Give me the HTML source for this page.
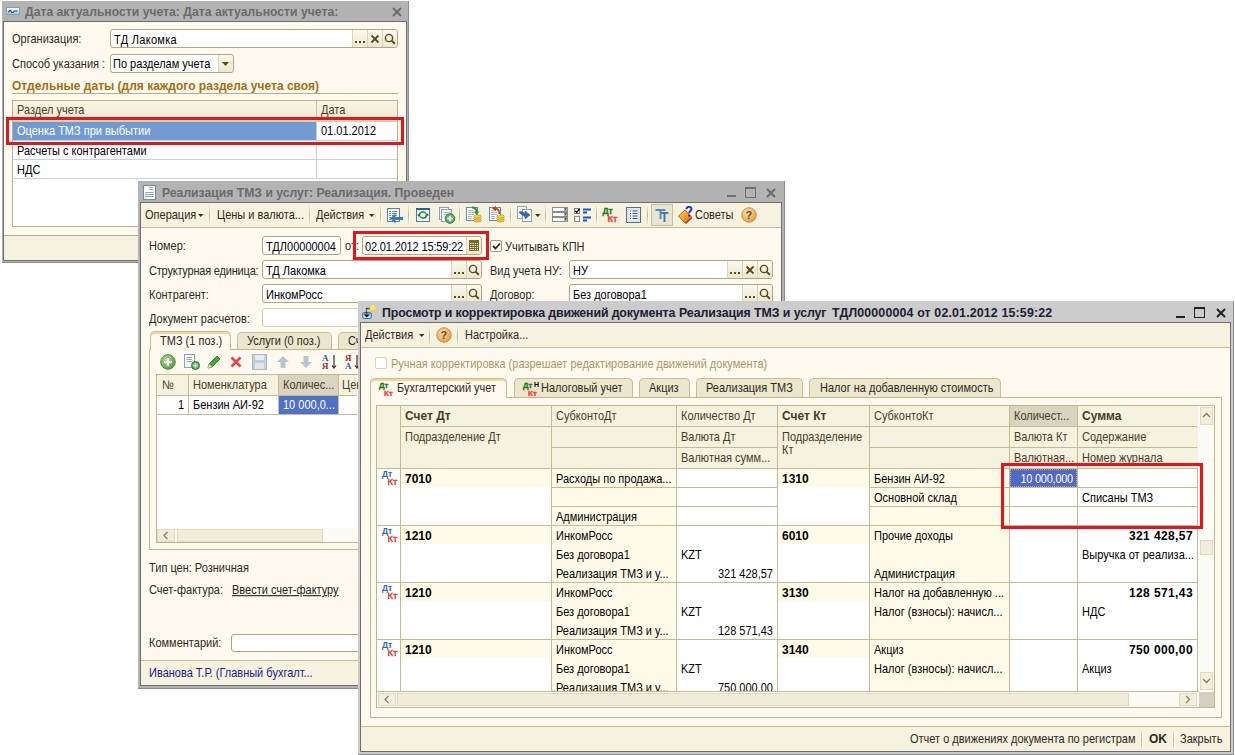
<!DOCTYPE html><html><head><meta charset="utf-8"><style>
html,body{margin:0;padding:0;width:1235px;height:755px;overflow:hidden;background:#fff;position:relative}
div,span,svg{position:absolute}
span{white-space:nowrap;line-height:13px;font-family:"Liberation Sans",sans-serif;font-size:11px}
span.n{transform:scaleY(1.12);transform-origin:0 10px}
</style></head><body>
<div style="left:2px;top:1px;width:407px;height:262px;background:#b3b3b3"></div>
<div style="left:2px;top:262px;width:407px;height:1px;background:#8c8c8c"></div>
<div style="left:408px;top:1px;width:1px;height:262px;background:#8c8c8c"></div>
<div style="left:3px;top:21px;width:404px;height:240px;box-sizing:border-box;border:1px solid #6e6e6e;background:#fefaf0"></div>
<svg style="position:absolute;left:6px;top:7px;" width="14" height="8" viewBox="0 0 14 8"><defs><linearGradient id="g1" x1="0" y1="0" x2="0" y2="1"><stop offset="0" stop-color="#fff"/><stop offset="1" stop-color="#9cc6ea"/></linearGradient></defs><rect x="0.5" y="0.5" width="13" height="7" fill="url(#g1)" stroke="#8a9bb0"/><path d="M2.5 5.5C3.5 3 4.5 2.5 5.5 5C6.5 6.5 7.5 5 8.5 4H11.5" fill="none" stroke="#1f4a6a" stroke-width="1.2"/></svg>
<span style="left:25px;top:6px;font-size:12.2px;font-weight:bold;color:#6b6b6b;">Дата актуальности учета: Дата актуальности учета:</span>
<svg style="position:absolute;left:392px;top:7px;" width="10" height="10" viewBox="0 0 10 10"><path d="M1.0 1.0L9.0 9.0M9.0 1.0L1.0 9.0" stroke="#6b6b6b" stroke-width="2" stroke-linecap="butt"/></svg>
<span class="n" style="left:12px;top:33px;color:#30281a;">Организация:</span>
<div style="left:110px;top:29px;width:288px;height:19px;box-sizing:border-box;border:1px solid #b4a67b;border-radius:3px;background:#fff"></div>
<span class="n" style="left:114px;top:34px;color:#000;letter-spacing:0.3px">ТД Лакомка</span>
<div style="left:382px;top:30px;width:15px;height:17px;background:linear-gradient(#fbf9f0,#ece7d2);border-left:1px solid #ddd5bb;box-sizing:border-box;border-radius:0 3px 3px 0"></div>
<svg style="position:absolute;left:384px;top:33px;" width="12" height="12" viewBox="0 0 12 12"><circle cx="5" cy="5" r="3.6" fill="none" stroke="#5a4a14" stroke-width="1.4"/><path d="M7.6 7.6L10.8 10.8" stroke="#5a4a14" stroke-width="2"/></svg>
<div style="left:367px;top:30px;width:15px;height:17px;background:linear-gradient(#fbf9f0,#ece7d2);border-left:1px solid #ddd5bb;box-sizing:border-box"></div>
<svg style="position:absolute;left:370px;top:34px;" width="10" height="10" viewBox="0 0 10 10"><path d="M1.5 1.5L8.5 8.5M8.5 1.5L1.5 8.5" stroke="#5a4a14" stroke-width="1.8"/></svg>
<div style="left:352px;top:30px;width:15px;height:17px;background:linear-gradient(#fbf9f0,#ece7d2);border-left:1px solid #ddd5bb;box-sizing:border-box"></div>
<div style="left:355px;top:41px;width:2px;height:2px;background:#5a4a14"></div>
<div style="left:359px;top:41px;width:2px;height:2px;background:#5a4a14"></div>
<div style="left:363px;top:41px;width:2px;height:2px;background:#5a4a14"></div>
<span class="n" style="left:12px;top:58px;color:#30281a;">Способ указания :</span>
<div style="left:110px;top:54px;width:124px;height:19px;box-sizing:border-box;border:1px solid #b4a67b;border-radius:3px;background:#fff"></div>
<span class="n" style="left:113px;top:58px;color:#000;">По разделам учета</span>
<div style="left:218px;top:55px;width:15px;height:17px;background:linear-gradient(#fbf9f0,#ece7d2);border-left:1px solid #ddd5bb;box-sizing:border-box;border-radius:0 3px 3px 0"></div>
<svg style="position:absolute;left:222px;top:62px;" width="8" height="5" viewBox="0 0 8 5"><path d="M0 0H7L3.5 4Z" fill="#5a4a14"/></svg>
<span style="left:12px;top:80px;font-size:12px;font-weight:bold;color:#a66e0e;">Отдельные даты (для каждого раздела учета своя)</span>
<div style="left:12px;top:93px;width:386px;height:1px;background:#b8b08a"></div>
<div style="left:12px;top:100px;width:386px;height:127px;box-sizing:border-box;border:1px solid #bcb08a;background:#fff"></div>
<div style="left:13px;top:101px;width:384px;height:19px;background:linear-gradient(#f8f5e6,#eee9d2)"></div>
<div style="left:13px;top:120px;width:384px;height:2px;background:#d8cfb3"></div>
<div style="left:316px;top:101px;width:1px;height:20px;background:#cfc4a0"></div>
<span class="n" style="left:17px;top:104px;color:#4a3d1f;">Раздел учета</span>
<span class="n" style="left:321px;top:104px;color:#4a3d1f;">Дата</span>
<div style="left:13px;top:122px;width:303px;height:18px;background:#6f9bd1"></div>
<span class="n" style="left:17px;top:125px;color:#fff;">Оценка ТМЗ при выбытии</span>
<span class="n" style="left:321px;top:125px;color:#000;">01.01.2012</span>
<div style="left:316px;top:121px;width:1px;height:58px;background:#c8d2de"></div>
<div style="left:13px;top:140px;width:384px;height:1px;background:#c8d2de"></div>
<div style="left:13px;top:159px;width:384px;height:1px;background:#c8d2de"></div>
<div style="left:13px;top:178px;width:384px;height:1px;background:#c8d2de"></div>
<span class="n" style="left:17px;top:145px;color:#000;">Расчеты с контрагентами</span>
<span class="n" style="left:17px;top:164px;color:#000;">НДС</span>
<div style="left:6px;top:117px;width:398px;height:28px;box-sizing:border-box;border:3px solid #e8141c;z-index:50"></div>
<div style="left:4px;top:235px;width:402px;height:1px;background:#b6ae88"></div>
<div style="left:4px;top:236px;width:402px;height:24px;background:#f5f2df"></div>
<div style="left:138px;top:181px;width:647px;height:508px;background:#b3b3b3"></div>
<div style="left:138px;top:688px;width:647px;height:1px;background:#8c8c8c"></div>
<div style="left:784px;top:181px;width:1px;height:508px;background:#8c8c8c"></div>
<div style="left:140px;top:202px;width:642px;height:484px;box-sizing:border-box;border:1px solid #6e6e6e;background:#fefaf0"></div>
<svg style="position:absolute;left:143px;top:185px;" width="13" height="15" viewBox="0 0 13 15"><rect x="0.5" y="0.5" width="12" height="14" fill="#fff" stroke="#6e8aa6"/><path d="M6 2.5H10M6 4.5H10M2 7.5H10.5M2 9.5H10.5M2 11.5H10.5" stroke="#8fa6bc" stroke-width="1"/></svg>
<span style="left:162px;top:187px;font-size:12.2px;font-weight:bold;color:#6b6b6b;">Реализация ТМЗ и услуг: Реализация. Проведен</span>
<div style="left:727px;top:195px;width:9px;height:2px;background:#6e6e6e"></div>
<div style="left:745px;top:187px;width:11px;height:11px;box-sizing:border-box;border:1px solid #6e6e6e;border-top-width:2px"></div>
<svg style="position:absolute;left:766px;top:188px;" width="10" height="10" viewBox="0 0 10 10"><path d="M1.0 1.0L9.0 9.0M9.0 1.0L1.0 9.0" stroke="#6b6b6b" stroke-width="2" stroke-linecap="butt"/></svg>
<div style="left:141px;top:203px;width:640px;height:24px;background:#f5f2df"></div>
<div style="left:141px;top:227px;width:640px;height:1px;background:#c6bb95"></div>
<span class="n" style="left:145px;top:209px;color:#30281a;">Операция</span>
<svg style="position:absolute;left:198px;top:214px;" width="6" height="4" viewBox="0 0 6 4"><path d="M0 0H5.5L2.75 3Z" fill="#3d3319"/></svg>
<div style="left:209px;top:206px;width:1px;height:18px;background:linear-gradient(rgba(190,180,140,0.2),#bfb48e 50%,rgba(190,180,140,0.2))"></div>
<div style="left:210px;top:206px;width:1px;height:18px;background:#fbf9f1"></div>
<span class="n" style="left:217px;top:209px;color:#30281a;">Цены и валюта...</span>
<div style="left:309px;top:206px;width:1px;height:18px;background:linear-gradient(rgba(190,180,140,0.2),#bfb48e 50%,rgba(190,180,140,0.2))"></div>
<div style="left:310px;top:206px;width:1px;height:18px;background:#fbf9f1"></div>
<span class="n" style="left:316px;top:209px;color:#30281a;">Действия</span>
<svg style="position:absolute;left:369px;top:214px;" width="6" height="4" viewBox="0 0 6 4"><path d="M0 0H5.5L2.75 3Z" fill="#3d3319"/></svg>
<div style="left:380px;top:206px;width:1px;height:18px;background:linear-gradient(rgba(190,180,140,0.2),#bfb48e 50%,rgba(190,180,140,0.2))"></div>
<div style="left:381px;top:206px;width:1px;height:18px;background:#fbf9f1"></div>
<svg style="position:absolute;left:386px;top:207px;" width="18" height="17" viewBox="0 0 18 17"><rect x="1.5" y="1.5" width="12" height="13" fill="#fff" stroke="#5b7fa6"/><path d="M3 4.5H5M6 4.5H11M3 6.5H5M6 6.5H11M3 8.5H5M6 8.5H11M3 10.5H5M3 12.5H5" stroke="#5a88c0"/><path d="M17 11.5H8" stroke="#3a7ab8" stroke-width="3"/><path d="M9.5 6.5L4 11.5L9.5 16.5Z" fill="#3a7ab8"/></svg>
<div style="left:408px;top:206px;width:1px;height:18px;background:linear-gradient(rgba(190,180,140,0.2),#bfb48e 50%,rgba(190,180,140,0.2))"></div>
<div style="left:409px;top:206px;width:1px;height:18px;background:#fbf9f1"></div>
<svg style="position:absolute;left:416px;top:208px;" width="14" height="14" viewBox="0 0 14 14"><rect x="0.5" y="0.5" width="13" height="13" fill="#eef4fa" stroke="#5a7a9a"/><rect x="0" y="0" width="14" height="2" fill="#2f6090"/><path d="M3 7A4 4 0 0 1 10 5.5" stroke="#2a8a2a" stroke-width="1.5" fill="none"/><path d="M11 7A4 4 0 0 1 4 8.5" stroke="#2a8a2a" stroke-width="1.5" fill="none"/><path d="M1 6.5H5L3 9Z" fill="#1f7a1f"/><path d="M9 7.5H13L11 5Z" fill="#1f7a1f"/></svg>
<svg style="position:absolute;left:439px;top:207px;" width="17" height="17" viewBox="0 0 17 17"><rect x="0.5" y="0.5" width="9" height="12" fill="#fff" stroke="#8aa0c0"/><rect x="2.5" y="2.5" width="10" height="12" fill="#fff" stroke="#8aa0c0"/><path d="M4.5 5.5H10M4.5 7.5H8" stroke="#aab8c8"/><circle cx="11" cy="11.5" r="4.8" fill="#5fae5f" stroke="#3a7a3a"/><path d="M8.3 11.5H13.7M11 8.8V14.2" stroke="#fff" stroke-width="1.8"/></svg>
<div style="left:459px;top:206px;width:1px;height:18px;background:linear-gradient(rgba(190,180,140,0.2),#bfb48e 50%,rgba(190,180,140,0.2))"></div>
<div style="left:460px;top:206px;width:1px;height:18px;background:#fbf9f1"></div>
<svg style="position:absolute;left:466px;top:206px;" width="16" height="17" viewBox="0 0 16 17"><rect x="0.5" y="1.5" width="11" height="13" fill="#fff" stroke="#6a8aaa"/><path d="M2 4.5H7M2 6.5H8M2 8.5H8M2 10.5H6M2 12.5H6" stroke="#a8bcd0"/><path d="M6 1.5C9 1.5 10.5 2.5 10.5 6" stroke="#2a9a2a" stroke-width="1.8" fill="none"/><path d="M7.5 5.5H13.5L10.5 9Z" fill="#2a9a2a"/><g fill="#f5d44a" stroke="#b8901a" stroke-width="0.7"><ellipse cx="11.5" cy="14.5" rx="3.8" ry="1.6"/><ellipse cx="11.5" cy="12.5" rx="3.8" ry="1.6"/><ellipse cx="11.5" cy="10.5" rx="3.8" ry="1.6"/></g></svg>
<svg style="position:absolute;left:489px;top:206px;" width="16" height="17" viewBox="0 0 16 17"><rect x="0.5" y="1.5" width="11" height="13" fill="#fff" stroke="#6a8aaa"/><path d="M2 4.5H7M2 6.5H8M2 8.5H8M2 10.5H6M2 12.5H6" stroke="#a8bcd0"/><path d="M10.5 8C10.5 4 8.5 2.5 6 2.5" stroke="#e03020" stroke-width="1.8" fill="none"/><path d="M7 0L3 2.5L7 5Z" fill="#e03020"/><g fill="#f5d44a" stroke="#b8901a" stroke-width="0.7"><ellipse cx="11.5" cy="14.5" rx="3.8" ry="1.6"/><ellipse cx="11.5" cy="12.5" rx="3.8" ry="1.6"/><ellipse cx="11.5" cy="10.5" rx="3.8" ry="1.6"/></g></svg>
<div style="left:510px;top:206px;width:1px;height:18px;background:linear-gradient(rgba(190,180,140,0.2),#bfb48e 50%,rgba(190,180,140,0.2))"></div>
<div style="left:511px;top:206px;width:1px;height:18px;background:#fbf9f1"></div>
<svg style="position:absolute;left:517px;top:206px;" width="16" height="17" viewBox="0 0 16 17"><rect x="0.5" y="0.5" width="9" height="12" fill="#f4f4f4" stroke="#9aa8b8"/><rect x="5.5" y="3.5" width="9" height="12" fill="#fff" stroke="#8aa0b8"/><path d="M2 6C4 5 6 6 8 7.5V5L13 9L8 13V10.5C6 9.5 4 9 2 6Z" fill="#2f6fa8" stroke="#1f4f80" stroke-width="0.5"/></svg>
<svg style="position:absolute;left:535px;top:214px;" width="6" height="4" viewBox="0 0 6 4"><path d="M0 0H5.5L2.75 3Z" fill="#3d3319"/></svg>
<div style="left:545px;top:206px;width:1px;height:18px;background:linear-gradient(rgba(190,180,140,0.2),#bfb48e 50%,rgba(190,180,140,0.2))"></div>
<div style="left:546px;top:206px;width:1px;height:18px;background:#fbf9f1"></div>
<svg style="position:absolute;left:552px;top:207px;" width="17" height="16" viewBox="0 0 17 16"><g fill="#fff" stroke="#8c8c8c"><rect x="0.5" y="0.5" width="15" height="4"/><rect x="0.5" y="5.5" width="15" height="4"/><rect x="0.5" y="10.5" width="15" height="4"/></g><g fill="#b0b0b0"><rect x="12" y="1" width="3" height="3"/><rect x="12" y="6" width="3" height="3"/><rect x="12" y="11" width="3" height="3"/></g><g fill="#111"><path d="M12.5 1.5H14.5L13.5 3Z"/><path d="M12.5 6.5H14.5L13.5 8Z"/><path d="M12.5 11.5H14.5L13.5 13Z"/></g></svg>
<svg style="position:absolute;left:574px;top:207px;" width="18" height="16" viewBox="0 0 18 16"><rect x="0.5" y="1.5" width="5" height="5" fill="#fff" stroke="#888"/><path d="M1.3 3.8L2.8 5.5L5.5 1.8" stroke="#000" stroke-width="1.3" fill="none"/><rect x="0.5" y="9.5" width="5" height="5" fill="#fff" stroke="#888"/><path d="M9 2.5H17M9 5.5H13M9 10.5H17M9 13.5H13" stroke="#1f55cc" stroke-width="2"/></svg>
<div style="left:596px;top:206px;width:1px;height:18px;background:linear-gradient(rgba(190,180,140,0.2),#bfb48e 50%,rgba(190,180,140,0.2))"></div>
<div style="left:597px;top:206px;width:1px;height:18px;background:#fbf9f1"></div>
<svg style="position:absolute;left:602px;top:206px;" width="18" height="17" viewBox="0 0 18 17"><text x="0.5" y="8.2" font-family="Liberation Sans" font-weight="bold" font-size="8.6" fill="#1b7a1b" stroke="#1b7a1b" stroke-width="0.3">Дт</text><text x="5.5" y="16" font-family="Liberation Sans" font-weight="bold" font-size="9" fill="#ff3a3a" stroke="#ff3a3a" stroke-width="0.3">Кт</text></svg>
<svg style="position:absolute;left:626px;top:207px;" width="16" height="16" viewBox="0 0 16 16"><rect x="0.5" y="0.5" width="14" height="15" fill="#fff" stroke="#5a6a80"/><rect x="2" y="2" width="11" height="12" fill="#eef4fb" stroke="#9fb4cc" stroke-width="0.6"/><path d="M4 4H5M6.5 4H11.5M4 6.5H5M6.5 6.5H11.5M4 9H5M6.5 9H11.5M4 11.5H5M6.5 11.5H11.5" stroke="#2a4f8a"/></svg>
<div style="left:647px;top:206px;width:1px;height:18px;background:linear-gradient(rgba(190,180,140,0.2),#bfb48e 50%,rgba(190,180,140,0.2))"></div>
<div style="left:648px;top:206px;width:1px;height:18px;background:#fbf9f1"></div>
<div style="left:651px;top:204px;width:22px;height:22px;box-sizing:border-box;border:1px solid #c9bf9f;background:#e9e4cf"></div>
<svg style="position:absolute;left:655px;top:208px;" width="15" height="15" viewBox="0 0 15 15"><path d="M1 2H10M5.5 2V11" stroke="#4f8dbf" stroke-width="2"/><path d="M6 5H13M9.5 5V14" stroke="#3f7aa8" stroke-width="2"/><path d="M1 1V3M10 1V3M6 4V6M13 4V6" stroke="#4f8dbf" stroke-width="1"/></svg>
<svg style="position:absolute;left:677px;top:206px;" width="17" height="18" viewBox="0 0 17 18"><defs><linearGradient id="bk" x1="0" y1="0" x2="1" y2="1"><stop offset="0" stop-color="#ffe040"/><stop offset="1" stop-color="#f06010"/></linearGradient></defs><path d="M1.5 10L8 4L14.5 11L8 17Z" fill="url(#bk)" stroke="#a04a10" stroke-width="0.8"/><path d="M8 17L14.5 11L15.5 12L9 18Z" fill="#c03a10"/><path d="M9.5 3.2C9.5 1.5 10.5 0.8 12 0.8C13.5 0.8 14.5 1.6 14.5 3C14.5 4.6 12.2 5 12.2 7.2" fill="none" stroke="#1c2ee0" stroke-width="1.9"/><rect x="11.2" y="8.6" width="2" height="2" fill="#1c2ee0"/></svg>
<span class="n" style="left:695px;top:209px;color:#30281a;">Советы</span>
<svg style="position:absolute;left:741px;top:207px;" width="16" height="16" viewBox="0 0 16 16"><defs><radialGradient id="hg" cx="0.4" cy="0.35" r="0.7"><stop offset="0" stop-color="#fde3b5"/><stop offset="1" stop-color="#e39a3a"/></radialGradient></defs><circle cx="8" cy="8" r="7.3" fill="url(#hg)" stroke="#c98434" stroke-width="0.8"/><text x="4.6" y="12" font-family="Liberation Sans" font-size="11" font-weight="bold" fill="#6a4a2a">?</text></svg>
<span class="n" style="left:149px;top:240px;color:#30281a;">Номер:</span>
<div style="left:262px;top:236px;width:79px;height:19px;box-sizing:border-box;border:1px solid #b4a67b;border-radius:3px;background:#fff"></div>
<span class="n" style="left:266px;top:241px;color:#000;">ТДЛ00000004</span>
<span class="n" style="left:345px;top:240px;color:#30281a;">от:</span>
<div style="left:362px;top:236px;width:120px;height:19px;box-sizing:border-box;border:1px solid #b4a67b;border-radius:3px;background:#fff"></div>
<span class="n" style="left:365px;top:241px;color:#000;letter-spacing:-0.15px">02.01.2012 15:59:22</span>
<div style="left:466px;top:237px;width:15px;height:17px;background:linear-gradient(#fbf9f0,#ece7d2);border-left:1px solid #ddd5bb;box-sizing:border-box;border-radius:0 3px 3px 0"></div>
<svg style="position:absolute;left:469px;top:240px;" width="11" height="12" viewBox="0 0 11 12"><g fill="none" stroke="#7d6a22" stroke-width="1"><rect x="0.5" y="0.5" width="9" height="10"/><path d="M0.5 2.5H9.5M0.5 4.5H9.5M0.5 6.5H9.5M0.5 8.5H9.5M3 0.5V10.5M5.5 0.5V10.5M7.5 0.5V10.5"/></g><rect x="0" y="0" width="10" height="2" fill="#7d6a22"/></svg>
<!--d-->
<div style="left:353px;top:231px;width:136px;height:29px;box-sizing:border-box;border:3px solid #e8141c;z-index:50"></div>
<div style="left:490px;top:240px;width:12px;height:12px;box-sizing:border-box;border:1px solid #a89a6e;border-radius:2px;background:#fff"></div>
<svg style="position:absolute;left:492px;top:242px;" width="9" height="8" viewBox="0 0 9 8"><path d="M1 4L3.5 6.5L8 1.5" fill="none" stroke="#222" stroke-width="1.8"/></svg>
<span class="n" style="left:505px;top:241px;color:#30281a;">Учитывать КПН</span>
<span class="n" style="left:149px;top:265px;color:#30281a;letter-spacing:-0.2px">Структурная единица:</span>
<div style="left:262px;top:260px;width:220px;height:19px;box-sizing:border-box;border:1px solid #b4a67b;border-radius:3px;background:#fff"></div>
<span class="n" style="left:266px;top:265px;color:#000;">ТД Лакомка</span>
<div style="left:466px;top:261px;width:15px;height:17px;background:linear-gradient(#fbf9f0,#ece7d2);border-left:1px solid #ddd5bb;box-sizing:border-box;border-radius:0 3px 3px 0"></div>
<svg style="position:absolute;left:468px;top:264px;" width="12" height="12" viewBox="0 0 12 12"><circle cx="5" cy="5" r="3.6" fill="none" stroke="#5a4a14" stroke-width="1.4"/><path d="M7.6 7.6L10.8 10.8" stroke="#5a4a14" stroke-width="2"/></svg>
<div style="left:451px;top:261px;width:15px;height:17px;background:linear-gradient(#fbf9f0,#ece7d2);border-left:1px solid #ddd5bb;box-sizing:border-box"></div>
<div style="left:454px;top:272px;width:2px;height:2px;background:#5a4a14"></div>
<div style="left:458px;top:272px;width:2px;height:2px;background:#5a4a14"></div>
<div style="left:462px;top:272px;width:2px;height:2px;background:#5a4a14"></div>
<span class="n" style="left:490px;top:265px;color:#30281a;">Вид учета НУ:</span>
<div style="left:569px;top:260px;width:204px;height:19px;box-sizing:border-box;border:1px solid #b4a67b;border-radius:3px;background:#fff"></div>
<span class="n" style="left:573px;top:265px;color:#000;">НУ</span>
<div style="left:757px;top:261px;width:15px;height:17px;background:linear-gradient(#fbf9f0,#ece7d2);border-left:1px solid #ddd5bb;box-sizing:border-box;border-radius:0 3px 3px 0"></div>
<svg style="position:absolute;left:759px;top:264px;" width="12" height="12" viewBox="0 0 12 12"><circle cx="5" cy="5" r="3.6" fill="none" stroke="#5a4a14" stroke-width="1.4"/><path d="M7.6 7.6L10.8 10.8" stroke="#5a4a14" stroke-width="2"/></svg>
<div style="left:742px;top:261px;width:15px;height:17px;background:linear-gradient(#fbf9f0,#ece7d2);border-left:1px solid #ddd5bb;box-sizing:border-box"></div>
<svg style="position:absolute;left:745px;top:265px;" width="10" height="10" viewBox="0 0 10 10"><path d="M1.5 1.5L8.5 8.5M8.5 1.5L1.5 8.5" stroke="#5a4a14" stroke-width="1.8"/></svg>
<div style="left:727px;top:261px;width:15px;height:17px;background:linear-gradient(#fbf9f0,#ece7d2);border-left:1px solid #ddd5bb;box-sizing:border-box"></div>
<div style="left:730px;top:272px;width:2px;height:2px;background:#5a4a14"></div>
<div style="left:734px;top:272px;width:2px;height:2px;background:#5a4a14"></div>
<div style="left:738px;top:272px;width:2px;height:2px;background:#5a4a14"></div>
<span class="n" style="left:149px;top:289px;color:#30281a;">Контрагент:</span>
<div style="left:262px;top:284px;width:220px;height:19px;box-sizing:border-box;border:1px solid #b4a67b;border-radius:3px;background:#fff"></div>
<span class="n" style="left:266px;top:289px;color:#000;">ИнкомРосс</span>
<div style="left:466px;top:285px;width:15px;height:17px;background:linear-gradient(#fbf9f0,#ece7d2);border-left:1px solid #ddd5bb;box-sizing:border-box;border-radius:0 3px 3px 0"></div>
<svg style="position:absolute;left:468px;top:288px;" width="12" height="12" viewBox="0 0 12 12"><circle cx="5" cy="5" r="3.6" fill="none" stroke="#5a4a14" stroke-width="1.4"/><path d="M7.6 7.6L10.8 10.8" stroke="#5a4a14" stroke-width="2"/></svg>
<div style="left:451px;top:285px;width:15px;height:17px;background:linear-gradient(#fbf9f0,#ece7d2);border-left:1px solid #ddd5bb;box-sizing:border-box"></div>
<div style="left:454px;top:296px;width:2px;height:2px;background:#5a4a14"></div>
<div style="left:458px;top:296px;width:2px;height:2px;background:#5a4a14"></div>
<div style="left:462px;top:296px;width:2px;height:2px;background:#5a4a14"></div>
<span class="n" style="left:490px;top:289px;color:#30281a;">Договор:</span>
<div style="left:569px;top:284px;width:204px;height:19px;box-sizing:border-box;border:1px solid #b4a67b;border-radius:3px;background:#fff"></div>
<span class="n" style="left:573px;top:289px;color:#000;">Без договора1</span>
<div style="left:757px;top:285px;width:15px;height:17px;background:linear-gradient(#fbf9f0,#ece7d2);border-left:1px solid #ddd5bb;box-sizing:border-box;border-radius:0 3px 3px 0"></div>
<svg style="position:absolute;left:759px;top:288px;" width="12" height="12" viewBox="0 0 12 12"><circle cx="5" cy="5" r="3.6" fill="none" stroke="#5a4a14" stroke-width="1.4"/><path d="M7.6 7.6L10.8 10.8" stroke="#5a4a14" stroke-width="2"/></svg>
<div style="left:742px;top:285px;width:15px;height:17px;background:linear-gradient(#fbf9f0,#ece7d2);border-left:1px solid #ddd5bb;box-sizing:border-box"></div>
<div style="left:745px;top:296px;width:2px;height:2px;background:#5a4a14"></div>
<div style="left:749px;top:296px;width:2px;height:2px;background:#5a4a14"></div>
<div style="left:753px;top:296px;width:2px;height:2px;background:#5a4a14"></div>
<span class="n" style="left:149px;top:313px;color:#30281a;">Документ расчетов:</span>
<div style="left:262px;top:308px;width:220px;height:19px;box-sizing:border-box;border:1px solid #d8cfb2;border-radius:3px;background:#fff"></div>
<div style="left:149px;top:349px;width:300px;height:201px;box-sizing:border-box;border:1px solid #c2b68f"></div>
<div style="left:237px;top:332px;width:95px;height:17px;box-sizing:border-box;border:1px solid #c8bd98;border-bottom:none;border-radius:5px 5px 0 0;background:#ece6cd"></div>
<span class="n" style="left:247px;top:335px;color:#30281a;">Услуги (0 поз.)</span>
<div style="left:338px;top:332px;width:60px;height:17px;box-sizing:border-box;border:1px solid #c8bd98;border-bottom:none;border-radius:5px 5px 0 0;background:#ece6cd"></div>
<span class="n" style="left:348px;top:335px;color:#30281a;">Счет-фактура</span>
<div style="left:150px;top:331px;width:81px;height:19px;box-sizing:border-box;border:1px solid #c8bd98;box-shadow:inset 0 1px 0 #f6d49a, inset 0 2px 0 #f6d49a;border-bottom:none;border-radius:5px 5px 0 0;background:#fefaf0"></div>
<span class="n" style="left:160px;top:335px;color:#30281a;">ТМЗ (1 поз.)</span>
<svg style="position:absolute;left:160px;top:354px;" width="16" height="16" viewBox="0 0 16 16"><defs><radialGradient id="gp" cx="0.4" cy="0.35" r="0.7"><stop offset="0" stop-color="#b6e59e"/><stop offset="1" stop-color="#4f9a3a"/></radialGradient></defs><circle cx="8" cy="8" r="7.3" fill="url(#gp)" stroke="#3d7a2e" stroke-width="0.8"/><path d="M4 8H12M8 4V12" stroke="#fff" stroke-width="2.2"/></svg>
<svg style="position:absolute;left:184px;top:354px;" width="16" height="16" viewBox="0 0 16 16"><rect x="0.5" y="0.5" width="10" height="13" fill="#fff" stroke="#8aa0b8"/><path d="M2.5 3.5H8M2.5 5.5H8M2.5 7.5H8" stroke="#9ab"/><circle cx="11.5" cy="11.5" r="4" fill="#5ab55a" stroke="#2e7d32"/><path d="M9.5 11.5H13.5M11.5 9.5V13.5" stroke="#fff" stroke-width="1.4"/></svg>
<svg style="position:absolute;left:207px;top:355px;" width="14" height="14" viewBox="0 0 14 14"><path d="M1 13L2 9L10 1L13 4L5 12Z" fill="#4aa53a" stroke="#2a6a1e" stroke-width="0.8"/><path d="M1 13L2 9L5 12Z" fill="#f2e6b0"/></svg>
<svg style="position:absolute;left:230px;top:356px;" width="12" height="12" viewBox="0 0 12 12"><path d="M1.5 1.5L10.5 10.5M10.5 1.5L1.5 10.5" stroke="#e64646" stroke-width="2.6"/></svg>
<svg style="position:absolute;left:252px;top:354px;" width="15" height="16" viewBox="0 0 15 16"><rect x="0.5" y="0.5" width="14" height="15" fill="#c3cdd6" stroke="#aab6c2"/><rect x="3" y="1" width="9" height="5" fill="#e6ecf1"/><rect x="3" y="9" width="9" height="6" fill="#dfe5ea"/></svg>
<svg style="position:absolute;left:276px;top:355px;" width="14" height="14" viewBox="0 0 14 14"><path d="M7 1L13 7H9.5V13H4.5V7H1Z" fill="#b8c4cc"/></svg>
<svg style="position:absolute;left:299px;top:355px;" width="14" height="14" viewBox="0 0 14 14"><path d="M7 13L13 7H9.5V1H4.5V7H1Z" fill="#b8c4cc"/></svg>
<svg style="position:absolute;left:322px;top:353px;" width="16" height="17" viewBox="0 0 16 17"><text x="0" y="8" font-family="Liberation Serif" font-weight="bold" font-size="9" fill="#2a5aa8">A</text><text x="0" y="16" font-family="Liberation Serif" font-weight="bold" font-size="9" fill="#a82a2a">Я</text><path d="M12 2V15M10 12.5L12 15L14 12.5" stroke="#333" fill="none" stroke-width="1.2"/></svg>
<svg style="position:absolute;left:345px;top:353px;" width="14" height="17" viewBox="0 0 14 17"><text x="0" y="8" font-family="Liberation Serif" font-weight="bold" font-size="9" fill="#a82a2a">Я</text><text x="0" y="16" font-family="Liberation Serif" font-weight="bold" font-size="9" fill="#2a5aa8">A</text><path d="M12 2V15M10 12.5L12 15L14 12.5" stroke="#333" fill="none" stroke-width="1.2"/></svg>
<div style="left:156px;top:374px;width:210px;height:169px;box-sizing:border-box;border:1px solid #c2b68f;background:#fff"></div>
<div style="left:157px;top:375px;width:200px;height:20px;background:#f5f2df"></div>
<div style="left:279px;top:375px;width:59px;height:20px;background:#dad5c1"></div>
<div style="left:157px;top:395px;width:200px;height:1px;background:#c7bc96"></div>
<div style="left:188px;top:375px;width:1px;height:39px;background:#c7bc96"></div>
<div style="left:278px;top:375px;width:1px;height:39px;background:#c7bc96"></div>
<div style="left:338px;top:375px;width:1px;height:39px;background:#c7bc96"></div>
<span class="n" style="left:162px;top:379px;color:#4a3d1f;">№</span>
<span class="n" style="left:193px;top:379px;color:#4a3d1f;">Номенклатура</span>
<span class="n" style="left:283px;top:379px;color:#4a3d1f;">Количес...</span>
<span class="n" style="left:342px;top:379px;color:#4a3d1f;">Цена</span>
<span class="n" style="left:158px;top:399px;width:26px;text-align:right;color:#000;">1</span>
<span class="n" style="left:193px;top:399px;color:#000;">Бензин АИ-92</span>
<div style="left:279px;top:396px;width:59px;height:18px;background:#5170c8"></div>
<span class="n" style="left:283px;top:399px;color:#fff;">10 000,0...</span>
<div style="left:157px;top:414px;width:200px;height:1px;background:#c7bc96"></div>
<div style="left:157px;top:528px;width:200px;height:14px;background:#fcfbf6"></div>
<div style="left:157px;top:529px;width:18px;height:13px;box-sizing:border-box;border:1px solid #e4dcc2;background:#f1edda"></div>
<svg style="position:absolute;left:163px;top:531px;" width="6" height="9" viewBox="0 0 6 9"><path d="M4.5 1L1 4.5L4.5 8" stroke="#8a7f60" fill="none" stroke-width="1.3"/></svg>
<div style="left:177px;top:529px;width:146px;height:13px;box-sizing:border-box;border:1px solid #e4dcc2;background:#f1edda"></div>
<span class="n" style="left:149px;top:562px;color:#30281a;">Тип цен: Розничная</span>
<span class="n" style="left:149px;top:584px;color:#30281a;">Счет-фактура:</span>
<span class="n" style="left:232px;top:584px;color:#2a2418;text-decoration:underline">Ввести счет-фактуру</span>
<span class="n" style="left:149px;top:637px;color:#30281a;">Комментарий:</span>
<div style="left:231px;top:634px;width:200px;height:18px;box-sizing:border-box;border:1px solid #b4a67b;border-radius:3px;background:#fff"></div>
<div style="left:141px;top:660px;width:640px;height:1px;background:#c6bb95"></div>
<div style="left:141px;top:661px;width:640px;height:24px;background:#f5f2df"></div>
<span class="n" style="left:149px;top:667px;color:#1c1c8c;">Иванова Т.Р. (Главный бухгалт...</span>
<div style="left:358px;top:301px;width:876px;height:454px;background:#cccccc"></div>
<div style="left:358px;top:754px;width:876px;height:1px;background:#8c8c8c"></div>
<div style="left:1233px;top:301px;width:1px;height:454px;background:#8c8c8c"></div>
<div style="left:360px;top:322px;width:871px;height:430px;box-sizing:border-box;border:1px solid #6e6e6e;background:#fefaf0"></div>
<svg style="position:absolute;left:361px;top:303px;" width="18" height="17" viewBox="0 0 18 17"><defs><linearGradient id="yd" x1="0" y1="0" x2="0" y2="1"><stop offset="0" stop-color="#fff6a8"/><stop offset="1" stop-color="#f2d410"/></linearGradient><linearGradient id="bb" x1="0" y1="0" x2="0" y2="1"><stop offset="0" stop-color="#6aa8d8"/><stop offset="1" stop-color="#c8ecff"/></linearGradient></defs><path d="M11.6 1.2L15.8 5.4L11.6 9.6L7.4 5.4Z" fill="url(#yd)" stroke="#d9b47a" stroke-width="0.6"/><rect x="1.5" y="9.5" width="9" height="6" rx="2" fill="url(#bb)" stroke="#3d6d94"/><path d="M5.5 5.5H8.5M5.5 5.5V11" stroke="#000" stroke-width="1.3" stroke-dasharray="1.1 0.9"/><path d="M3 11.5H8.5L5.75 14.5Z" fill="#000"/></svg>
<span style="left:382px;top:307px;font-size:12.4px;font-weight:bold;color:#202030;letter-spacing:-0.15px">Просмотр и корректировка движений документа</span>
<span style="left:679px;top:307px;font-size:12.4px;font-weight:bold;color:#202030;letter-spacing:-0.09px">Реализация ТМЗ и услуг</span>
<span style="left:832px;top:307px;font-size:12.4px;font-weight:bold;color:#202030;letter-spacing:0.15px">ТДЛ00000004 от 02.01.2012 15:59:22</span>
<div style="left:1176px;top:316px;width:9px;height:2px;background:#222"></div>
<div style="left:1194px;top:307px;width:11px;height:11px;box-sizing:border-box;border:1px solid #222;border-top-width:2px"></div>
<svg style="position:absolute;left:1216px;top:308px;" width="10" height="10" viewBox="0 0 10 10"><path d="M1.0 1.0L9.0 9.0M9.0 1.0L1.0 9.0" stroke="#222" stroke-width="2" stroke-linecap="butt"/></svg>
<div style="left:361px;top:323px;width:869px;height:24px;background:#f5f2df"></div>
<div style="left:361px;top:347px;width:869px;height:1px;background:#c6bb95"></div>
<span class="n" style="left:365px;top:329px;color:#30281a;">Действия</span>
<svg style="position:absolute;left:419px;top:334px;" width="6" height="4" viewBox="0 0 6 4"><path d="M0 0H5.5L2.75 3Z" fill="#3d3319"/></svg>
<div style="left:429px;top:327px;width:1px;height:18px;background:linear-gradient(rgba(190,180,140,0.2),#bfb48e 50%,rgba(190,180,140,0.2))"></div>
<div style="left:430px;top:327px;width:1px;height:18px;background:#fbf9f1"></div>
<svg style="position:absolute;left:436px;top:327px;" width="16" height="16" viewBox="0 0 16 16"><defs><radialGradient id="hg3" cx="0.4" cy="0.35" r="0.7"><stop offset="0" stop-color="#fde3b5"/><stop offset="1" stop-color="#e39a3a"/></radialGradient></defs><circle cx="8" cy="8" r="7.3" fill="url(#hg3)" stroke="#c98434" stroke-width="0.8"/><text x="4.6" y="12" font-family="Liberation Sans" font-size="11" font-weight="bold" fill="#6a4a2a">?</text></svg>
<div style="left:457px;top:327px;width:1px;height:18px;background:linear-gradient(rgba(190,180,140,0.2),#bfb48e 50%,rgba(190,180,140,0.2))"></div>
<div style="left:458px;top:327px;width:1px;height:18px;background:#fbf9f1"></div>
<span class="n" style="left:465px;top:329px;color:#30281a;">Настройка...</span>
<div style="left:375px;top:357px;width:12px;height:12px;box-sizing:border-box;border:1px solid #d9d1b9;border-radius:2px;background:#fff"></div>
<span class="n" style="left:391px;top:358px;color:#ad9868;">Ручная корректировка (разрешает редактирование движений документа)</span>
<div style="left:370px;top:397px;width:852px;height:321px;box-sizing:border-box;border:1px solid #c2b68f"></div>
<div style="left:514px;top:378px;width:119px;height:19px;box-sizing:border-box;border:1px solid #c8bd98;border-bottom:none;border-radius:5px 5px 0 0;background:#ece6cd"></div>
<span class="n" style="left:541px;top:382px;color:#30281a;">Налоговый учет</span>
<svg style="position:absolute;left:522px;top:380px;" width="18" height="16" viewBox="0 0 18 16"><text x="1" y="7.6" font-family="Liberation Sans" font-weight="bold" font-size="7.8" fill="#1b7a1b" stroke="#1b7a1b" stroke-width="0.35">Дт</text><text x="6" y="15.6" font-family="Liberation Sans" font-weight="bold" font-size="8" fill="#ff3a3a" stroke="#ff3a3a" stroke-width="0.35">Кт</text><text x="12" y="6.5" font-family="Liberation Sans" font-weight="bold" font-size="7" fill="#000">Н</text></svg>
<div style="left:639px;top:378px;width:51px;height:19px;box-sizing:border-box;border:1px solid #c8bd98;border-bottom:none;border-radius:5px 5px 0 0;background:#ece6cd"></div>
<span class="n" style="left:649px;top:382px;color:#30281a;">Акциз</span>
<div style="left:696px;top:378px;width:107px;height:19px;box-sizing:border-box;border:1px solid #c8bd98;border-bottom:none;border-radius:5px 5px 0 0;background:#ece6cd"></div>
<span class="n" style="left:706px;top:382px;color:#30281a;">Реализация ТМЗ</span>
<div style="left:809px;top:378px;width:192px;height:19px;box-sizing:border-box;border:1px solid #c8bd98;border-bottom:none;border-radius:5px 5px 0 0;background:#ece6cd"></div>
<span class="n" style="left:820px;top:382px;color:#30281a;">Налог на добавленную стоимость</span>
<div style="left:370px;top:378px;width:137px;height:20px;box-sizing:border-box;border:1px solid #c8bd98;box-shadow:inset 0 1px 0 #f6d49a, inset 0 2px 0 #f6d49a;border-bottom:none;border-radius:5px 5px 0 0;background:#fefaf0"></div>
<svg style="position:absolute;left:378px;top:380px;" width="18" height="16" viewBox="0 0 18 16"><text x="1" y="7.6" font-family="Liberation Sans" font-weight="bold" font-size="7.8" fill="#1b7a1b" stroke="#1b7a1b" stroke-width="0.35">Дт</text><text x="6" y="15.6" font-family="Liberation Sans" font-weight="bold" font-size="8" fill="#ff3a3a" stroke="#ff3a3a" stroke-width="0.35">Кт</text></svg>
<span class="n" style="left:397px;top:382px;color:#30281a;">Бухгалтерский учет</span>
<div style="left:376px;top:405px;width:839px;height:303px;box-sizing:border-box;border:1px solid #c2b68f;background:#fff"></div>
<div style="left:377px;top:406px;width:821px;height:63px;background:#f5f2df"></div>
<div style="left:1010px;top:406px;width:67px;height:20px;background:#d9d4c0"></div>
<div style="left:401px;top:426px;width:796px;height:1px;background:#c5ba92"></div>
<div style="left:552px;top:447px;width:124px;height:1px;background:#c5ba92"></div>
<div style="left:677px;top:447px;width:100px;height:1px;background:#c5ba92"></div>
<div style="left:870px;top:447px;width:139px;height:1px;background:#c5ba92"></div>
<div style="left:1010px;top:447px;width:67px;height:1px;background:#c5ba92"></div>
<div style="left:1078px;top:447px;width:119px;height:1px;background:#c5ba92"></div>
<div style="left:377px;top:468px;width:821px;height:1px;background:#c5ba92"></div>
<div style="left:401px;top:469px;width:150px;height:18px;background:#fefce8"></div>
<div style="left:552px;top:469px;width:124px;height:56px;background:#fefce8"></div>
<div style="left:778px;top:469px;width:91px;height:18px;background:#fefce8"></div>
<div style="left:870px;top:469px;width:139px;height:56px;background:#fefce8"></div>
<div style="left:401px;top:526px;width:150px;height:18px;background:#fefce8"></div>
<div style="left:552px;top:526px;width:124px;height:56px;background:#fefce8"></div>
<div style="left:778px;top:526px;width:91px;height:18px;background:#fefce8"></div>
<div style="left:870px;top:526px;width:139px;height:56px;background:#fefce8"></div>
<div style="left:401px;top:583px;width:150px;height:18px;background:#fefce8"></div>
<div style="left:552px;top:583px;width:124px;height:56px;background:#fefce8"></div>
<div style="left:778px;top:583px;width:91px;height:18px;background:#fefce8"></div>
<div style="left:870px;top:583px;width:139px;height:56px;background:#fefce8"></div>
<div style="left:401px;top:640px;width:150px;height:18px;background:#fefce8"></div>
<div style="left:552px;top:640px;width:124px;height:56px;background:#fefce8"></div>
<div style="left:778px;top:640px;width:91px;height:18px;background:#fefce8"></div>
<div style="left:870px;top:640px;width:139px;height:56px;background:#fefce8"></div>
<div style="left:377px;top:525px;width:820px;height:1px;background:#c5ba92"></div>
<div style="left:377px;top:582px;width:820px;height:1px;background:#c5ba92"></div>
<div style="left:377px;top:639px;width:820px;height:1px;background:#c5ba92"></div>
<div style="left:377px;top:696px;width:820px;height:1px;background:#c5ba92"></div>
<div style="left:552px;top:487px;width:124px;height:1px;background:#c5ba92"></div>
<div style="left:677px;top:487px;width:100px;height:1px;background:#c5ba92"></div>
<div style="left:870px;top:487px;width:139px;height:1px;background:#c5ba92"></div>
<div style="left:1010px;top:487px;width:67px;height:1px;background:#c5ba92"></div>
<div style="left:1078px;top:487px;width:119px;height:1px;background:#c5ba92"></div>
<div style="left:552px;top:506px;width:124px;height:1px;background:#c5ba92"></div>
<div style="left:677px;top:506px;width:100px;height:1px;background:#c5ba92"></div>
<div style="left:870px;top:506px;width:139px;height:1px;background:#c5ba92"></div>
<div style="left:1010px;top:506px;width:67px;height:1px;background:#c5ba92"></div>
<div style="left:1078px;top:506px;width:119px;height:1px;background:#c5ba92"></div>
<div style="left:400px;top:406px;width:1px;height:285px;background:#c5ba92"></div>
<div style="left:551px;top:406px;width:1px;height:285px;background:#c5ba92"></div>
<div style="left:676px;top:406px;width:1px;height:285px;background:#c5ba92"></div>
<div style="left:777px;top:406px;width:1px;height:285px;background:#c5ba92"></div>
<div style="left:869px;top:406px;width:1px;height:285px;background:#c5ba92"></div>
<div style="left:1009px;top:406px;width:1px;height:285px;background:#c5ba92"></div>
<div style="left:1077px;top:406px;width:1px;height:285px;background:#c5ba92"></div>
<div style="left:1197px;top:468px;width:1px;height:223px;background:#c5ba92"></div>
<div style="left:1010px;top:469px;width:67px;height:18px;box-sizing:border-box;background:#5068c8;border:1px dotted #c8b060"></div>
<span style="left:405px;top:410px;font-size:12px;font-weight:bold;color:#4a3d1f;">Счет Дт</span>
<span class="n" style="left:405px;top:431px;color:#4a3d1f;">Подразделение Дт</span>
<span class="n" style="left:556px;top:410px;color:#4a3d1f;">СубконтоДт</span>
<span class="n" style="left:681px;top:410px;color:#4a3d1f;">Количество Дт</span>
<span class="n" style="left:681px;top:431px;color:#4a3d1f;">Валюта Дт</span>
<span class="n" style="left:681px;top:452px;color:#4a3d1f;">Валютная сумм...</span>
<span style="left:782px;top:410px;font-size:12px;font-weight:bold;color:#4a3d1f;">Счет Кт</span>
<span class="n" style="left:782px;top:431px;color:#4a3d1f;">Подразделение</span>
<span class="n" style="left:782px;top:444px;color:#4a3d1f;">Кт</span>
<span class="n" style="left:874px;top:410px;color:#4a3d1f;">СубконтоКт</span>
<span class="n" style="left:1014px;top:410px;color:#4a3d1f;">Количест...</span>
<span class="n" style="left:1014px;top:431px;color:#4a3d1f;">Валюта Кт</span>
<span class="n" style="left:1014px;top:452px;color:#4a3d1f;">Валютная...</span>
<span style="left:1082px;top:410px;font-size:12px;font-weight:bold;color:#4a3d1f;">Сумма</span>
<span class="n" style="left:1082px;top:431px;color:#4a3d1f;">Содержание</span>
<span class="n" style="left:1082px;top:452px;color:#4a3d1f;">Номер журнала</span>
<div style="left:377px;top:469px;width:822px;height:222px;overflow:hidden">
<svg style="position:absolute;left:5px;top:1px;" width="16" height="16" viewBox="0 0 16 16"><text x="0" y="7" font-family="Liberation Sans" font-weight="bold" font-size="8.5" fill="#2a68a8">Дт</text><text x="5.5" y="14.5" font-family="Liberation Sans" font-size="9.5" fill="#d83020" stroke="#d83020" stroke-width="0.35">Кт</text></svg>
<span style="left:28px;top:4px;font-size:12px;font-weight:bold;color:#000;">7010</span>
<span class="n" style="left:179px;top:4px;color:#000;">Расходы по продажа...</span>
<span class="n" style="left:179px;top:42px;color:#000;">Администрация</span>
<span style="left:405px;top:4px;font-size:12px;font-weight:bold;color:#000;">1310</span>
<span class="n" style="left:497px;top:4px;color:#000;">Бензин АИ-92</span>
<span class="n" style="left:497px;top:23px;color:#000;">Основной склад</span>
<span class="n" style="left:705px;top:23px;color:#000;">Списаны ТМЗ</span>
<svg style="position:absolute;left:5px;top:58px;" width="16" height="16" viewBox="0 0 16 16"><text x="0" y="7" font-family="Liberation Sans" font-weight="bold" font-size="8.5" fill="#2a68a8">Дт</text><text x="5.5" y="14.5" font-family="Liberation Sans" font-size="9.5" fill="#d83020" stroke="#d83020" stroke-width="0.35">Кт</text></svg>
<span style="left:28px;top:61px;font-size:12px;font-weight:bold;color:#000;">1210</span>
<span class="n" style="left:179px;top:61px;color:#000;">ИнкомРосс</span>
<span class="n" style="left:179px;top:80px;color:#000;">Без договора1</span>
<span class="n" style="left:179px;top:99px;color:#000;">Реализация ТМЗ и у...</span>
<span class="n" style="left:304px;top:80px;color:#000;">KZT</span>
<span class="n" style="left:300px;top:99px;width:96px;text-align:right;color:#000;">321 428,57</span>
<span style="left:405px;top:61px;font-size:12px;font-weight:bold;color:#000;">6010</span>
<span class="n" style="left:497px;top:61px;color:#000;">Прочие доходы</span>
<span class="n" style="left:497px;top:99px;color:#000;">Администрация</span>
<span style="left:691px;top:61px;width:125px;text-align:right;font-size:12px;font-weight:bold;color:#000;letter-spacing:0.4px">321 428,57</span>
<span class="n" style="left:705px;top:80px;color:#000;">Выручка от реализа...</span>
<svg style="position:absolute;left:5px;top:115px;" width="16" height="16" viewBox="0 0 16 16"><text x="0" y="7" font-family="Liberation Sans" font-weight="bold" font-size="8.5" fill="#2a68a8">Дт</text><text x="5.5" y="14.5" font-family="Liberation Sans" font-size="9.5" fill="#d83020" stroke="#d83020" stroke-width="0.35">Кт</text></svg>
<span style="left:28px;top:118px;font-size:12px;font-weight:bold;color:#000;">1210</span>
<span class="n" style="left:179px;top:118px;color:#000;">ИнкомРосс</span>
<span class="n" style="left:179px;top:137px;color:#000;">Без договора1</span>
<span class="n" style="left:179px;top:156px;color:#000;">Реализация ТМЗ и у...</span>
<span class="n" style="left:304px;top:137px;color:#000;">KZT</span>
<span class="n" style="left:300px;top:156px;width:96px;text-align:right;color:#000;">128 571,43</span>
<span style="left:405px;top:118px;font-size:12px;font-weight:bold;color:#000;">3130</span>
<span class="n" style="left:497px;top:118px;color:#000;">Налог на добавленную ...</span>
<span class="n" style="left:497px;top:137px;color:#000;">Налог (взносы): начисл...</span>
<span style="left:691px;top:118px;width:125px;text-align:right;font-size:12px;font-weight:bold;color:#000;letter-spacing:0.4px">128 571,43</span>
<span class="n" style="left:705px;top:137px;color:#000;">НДС</span>
<svg style="position:absolute;left:5px;top:172px;" width="16" height="16" viewBox="0 0 16 16"><text x="0" y="7" font-family="Liberation Sans" font-weight="bold" font-size="8.5" fill="#2a68a8">Дт</text><text x="5.5" y="14.5" font-family="Liberation Sans" font-size="9.5" fill="#d83020" stroke="#d83020" stroke-width="0.35">Кт</text></svg>
<span style="left:28px;top:175px;font-size:12px;font-weight:bold;color:#000;">1210</span>
<span class="n" style="left:179px;top:175px;color:#000;">ИнкомРосс</span>
<span class="n" style="left:179px;top:194px;color:#000;">Без договора1</span>
<span class="n" style="left:179px;top:213px;color:#000;">Реализация ТМЗ и у...</span>
<span class="n" style="left:304px;top:194px;color:#000;">KZT</span>
<span class="n" style="left:300px;top:213px;width:96px;text-align:right;color:#000;">750 000,00</span>
<span style="left:405px;top:175px;font-size:12px;font-weight:bold;color:#000;">3140</span>
<span class="n" style="left:497px;top:175px;color:#000;">Акциз</span>
<span class="n" style="left:497px;top:194px;color:#000;">Налог (взносы): начисл...</span>
<span style="left:691px;top:175px;width:125px;text-align:right;font-size:12px;font-weight:bold;color:#000;letter-spacing:0.4px">750 000,00</span>
<span class="n" style="left:705px;top:194px;color:#000;">Акциз</span>
</div>
<span class="n" style="left:1010px;top:473px;width:63px;text-align:right;color:#fff;letter-spacing:-0.25px">10 000,000</span>
<div style="left:1199px;top:406px;width:15px;height:285px;background:#fcfbf5"></div>
<div style="left:1200px;top:407px;width:13px;height:18px;box-sizing:border-box;border:1px solid #e1d9bf;background:#f3efdd"></div>
<svg style="position:absolute;left:1202px;top:412px;" width="9" height="6" viewBox="0 0 9 6"><path d="M1 5L4.5 1.5L8 5" stroke="#8a7f60" fill="none" stroke-width="1.3"/></svg>
<div style="left:1200px;top:540px;width:13px;height:15px;box-sizing:border-box;border:1px solid #e1d9bf;background:#f1edda"></div>
<div style="left:1200px;top:672px;width:13px;height:18px;box-sizing:border-box;border:1px solid #e1d9bf;background:#f3efdd"></div>
<svg style="position:absolute;left:1202px;top:678px;" width="9" height="6" viewBox="0 0 9 6"><path d="M1 1L4.5 4.5L8 1" stroke="#8a7f60" fill="none" stroke-width="1.3"/></svg>
<div style="left:377px;top:691px;width:822px;height:1px;background:#c5ba92"></div>
<div style="left:377px;top:692px;width:822px;height:15px;background:#fcfbf5"></div>
<div style="left:378px;top:693px;width:18px;height:13px;box-sizing:border-box;border:1px solid #e1d9bf;background:#f3efdd"></div>
<svg style="position:absolute;left:384px;top:695px;" width="6" height="9" viewBox="0 0 6 9"><path d="M4.5 1L1 4.5L4.5 8" stroke="#8a7f60" fill="none" stroke-width="1.3"/></svg>
<div style="left:397px;top:693px;width:732px;height:13px;box-sizing:border-box;border:1px solid #e1d9bf;background:#f1edda"></div>
<div style="left:1179px;top:693px;width:18px;height:13px;box-sizing:border-box;border:1px solid #e1d9bf;background:#f3efdd"></div>
<svg style="position:absolute;left:1185px;top:695px;" width="6" height="9" viewBox="0 0 6 9"><path d="M1 1L4.5 4.5L1 8" stroke="#8a7f60" fill="none" stroke-width="1.3"/></svg>
<div style="left:1199px;top:692px;width:15px;height:15px;background:#d4d0c2"></div>
<div style="left:1001px;top:463px;width:202px;height:66px;box-sizing:border-box;border:3px solid #e8141c;z-index:50"></div>
<div style="left:361px;top:726px;width:869px;height:1px;background:#c6bb95"></div>
<div style="left:361px;top:727px;width:869px;height:24px;background:#f5f2df"></div>
<span class="n" style="left:910px;top:733px;color:#30281a;">Отчет о движениях документа по регистрам</span>
<div style="left:1141px;top:731px;width:1px;height:18px;background:linear-gradient(rgba(190,180,140,0.2),#bfb48e 50%,rgba(190,180,140,0.2))"></div>
<div style="left:1142px;top:731px;width:1px;height:18px;background:#fbf9f1"></div>
<span style="left:1149px;top:733px;font-size:12px;font-weight:bold;color:#30281a;">OK</span>
<div style="left:1173px;top:731px;width:1px;height:18px;background:linear-gradient(rgba(190,180,140,0.2),#bfb48e 50%,rgba(190,180,140,0.2))"></div>
<div style="left:1174px;top:731px;width:1px;height:18px;background:#fbf9f1"></div>
<span class="n" style="left:1180px;top:733px;color:#30281a;">Закрыть</span>
</body></html>
